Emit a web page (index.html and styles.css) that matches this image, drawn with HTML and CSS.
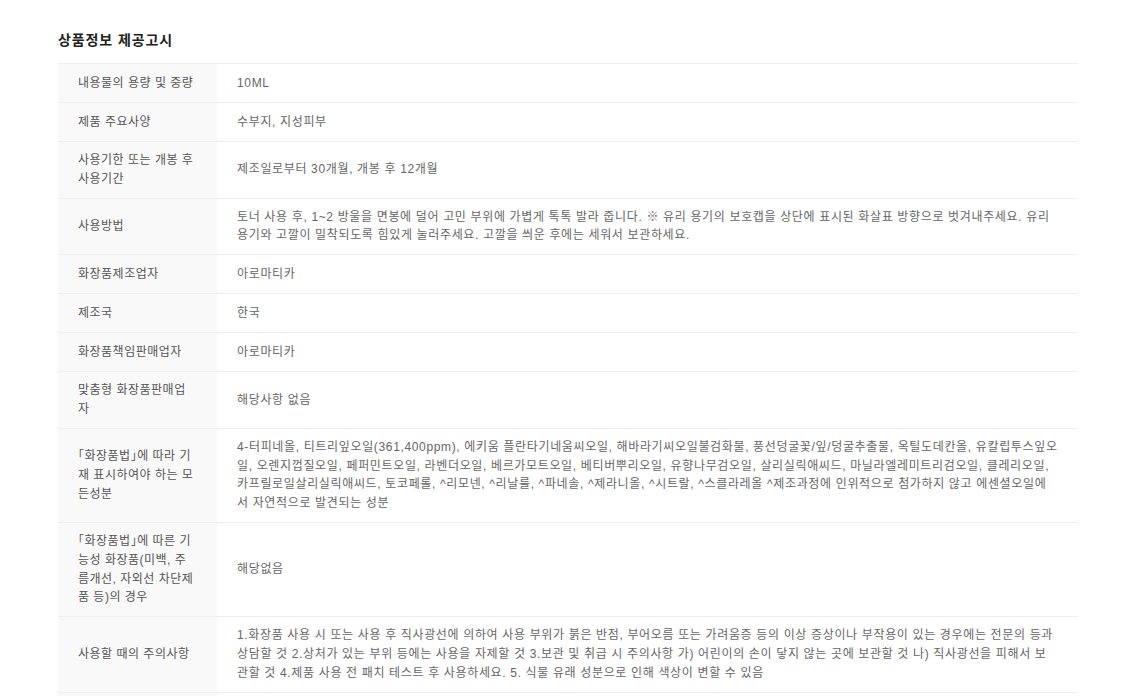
FILE: index.html
```html
<!DOCTYPE html>
<html lang="ko">
<head>
<meta charset="utf-8">
<title>상품정보 제공고시</title>
<link rel="stylesheet" href="styles.css">
</head>
<body>
<section class="notice">
  <h2 class="notice-title">상품정보 제공고시</h2>
  <table class="notice-table">
    <colgroup><col class="col-head"><col></colgroup>
    <tbody>
      <tr><th>내용물의 용량 및 중량</th><td>10ML</td></tr>
      <tr><th>제품 주요사양</th><td>수부지, 지성피부</td></tr>
      <tr><th>사용기한 또는 개봉 후 사용기간</th><td>제조일로부터 30개월, 개봉 후 12개월</td></tr>
      <tr><th>사용방법</th><td>토너 사용 후, 1~2 방울을 면봉에 덜어 고민 부위에 가볍게 톡톡 발라 줍니다. ※ 유리 용기의 보호캡을 상단에 표시된 화살표 방향으로 벗겨내주세요. 유리 용기와 고깔이 밀착되도록 힘있게 눌러주세요. 고깔을 씌운 후에는 세워서 보관하세요.</td></tr>
      <tr><th>화장품제조업자</th><td>아로마티카</td></tr>
      <tr><th>제조국</th><td>한국</td></tr>
      <tr><th>화장품책임판매업자</th><td>아로마티카</td></tr>
      <tr><th>맞춤형 화장품판매업자</th><td>해당사항 없음</td></tr>
      <tr><th>「화장품법」에 따라 기재 표시하여야 하는 모든성분</th><td>4-터피네올, 티트리잎오일(361,400ppm), 에키움 플란타기네움씨오일, 해바라기씨오일불검화물, 풍선덩굴꽃/잎/덩굴추출물, 옥틸도데칸올, 유칼립투스잎오일, 오렌지껍질오일, 페퍼민트오일, 라벤더오일, 베르가모트오일, 베티버뿌리오일, 유향나무검오일, 살리실릭애씨드, 마닐라엘레미트리검오일, 클레리오일, 카프릴로일살리실릭애씨드, 토코페롤, ^리모넨, ^리날룰, ^파네솔, ^제라니올, ^시트랄, ^스클라레올 ^제조과정에 인위적으로 첨가하지 않고 에센셜오일에서 자연적으로 발견되는 성분</td></tr>
      <tr><th>「화장품법」에 따른 기능성 화장품(미백, 주름개선, 자외선 차단제품 등)의 경우</th><td>해당없음</td></tr>
      <tr><th>사용할 때의 주의사항</th><td>1.화장품 사용 시 또는 사용 후 직사광선에 의하여 사용 부위가 붉은 반점, 부어오름 또는 가려움증 등의 이상 증상이나 부작용이 있는 경우에는 전문의 등과 상담할 것 2.상처가 있는 부위 등에는 사용을 자제할 것 3.보관 및 취급 시 주의사항 가) 어린이의 손이 닿지 않는 곳에 보관할 것 나) 직사광선을 피해서 보관할 것 4.제품 사용 전 패치 테스트 후 사용하세요. 5. 식물 유래 성분으로 인해 색상이 변할 수 있음</td></tr>
      <tr class="row-next"><th></th><td></td></tr>
    </tbody>
  </table>
</section>
</body>
</html>
```

FILE: styles.css
```css
html, body {
  margin: 0;
  padding: 0;
  background: #fff;
}

body {
  font-family: "Liberation Sans", "Noto Sans CJK KR", sans-serif;
  font-size: 12px;
  color: #666;
}

.notice {
  width: 1020px;
  margin: 0 0 0 58px;
  padding-top: 31px;
}

.notice-title {
  margin: 0 0 14px;
  font-size: 14px;
  line-height: 18px;
  font-weight: bold;
  letter-spacing: 0.9px;
  color: #222;
}

.notice-table {
  width: 100%;
  border-collapse: collapse;
  border-top: 1px solid #eee;
  table-layout: fixed;
}

.col-head {
  width: 159px;
}

.notice-table th,
.notice-table td {
  border-bottom: 1px solid #eee;
  padding: 9px 20px;
  height: 20px;
  line-height: 18.8px;
  letter-spacing: 0.65px;
  font-feature-settings: "halt";
  text-align: left;
  vertical-align: middle;
  font-weight: normal;
  color: #666;
}

.notice-table th {
  background: #f9f9f9;
  color: #555;
  letter-spacing: 0.5px;
}
```
